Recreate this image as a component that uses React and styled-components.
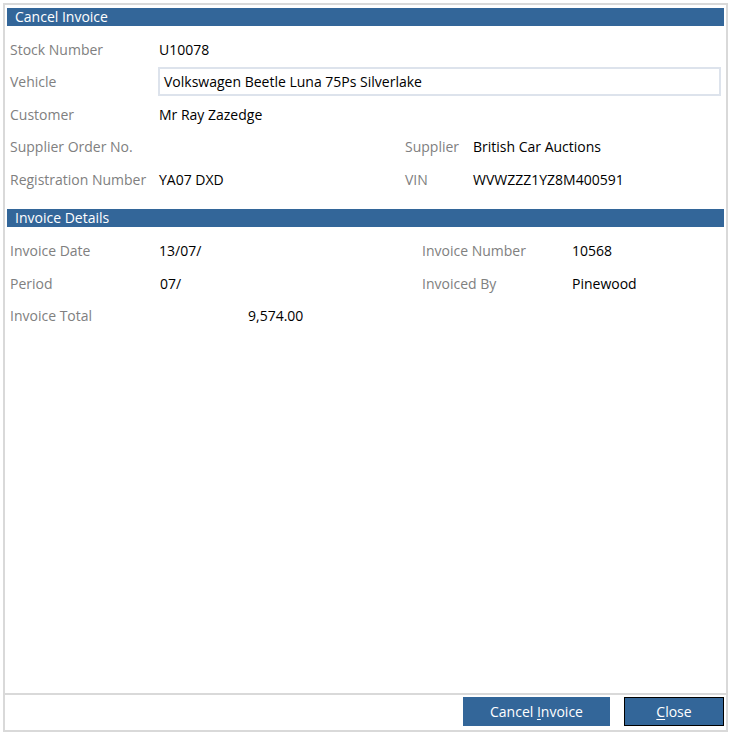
import React from "react";
import styled, { createGlobalStyle } from "styled-components";

const GlobalStyle = createGlobalStyle`
  html, body { margin: 0; padding: 0; background: #ffffff; }
  body { font-family: "Open Sans", "Noto Sans", "Liberation Sans", sans-serif; font-size: 14px; color: #000; }
  * { box-sizing: border-box; }
`;

const Frame = styled.div`
  margin: 3px 0 0 3px;
  width: 725px;
  height: 729px;
  border: 2px solid #d9d9d9;
  display: flex;
  flex-direction: column;
  background: #fff;
`;

const Body = styled.div`
  flex: 1;
  padding: 3px 2px 0 2px;
`;

const SectionHeader = styled.div`
  height: 18px;
  line-height: 18px;
  background: #336699;
  color: #fff;
  padding-left: 8px;
  font-size: 14px;
  margin-top: ${(p) => p.$top || 0}px;
`;

const Rows = styled.div`
  padding-top: ${(p) => p.$pad || 7}px;
  padding-left: 3px;
  display: flex;
  flex-direction: column;
`;

const Row = styled.div`
  height: ${(p) => p.$h || 33}px;
  display: grid;
  grid-template-columns: ${(p) => p.$cols};
  align-items: center;
  white-space: nowrap;
`;

const Label = styled.div`
  color: #808080;
`;

const Value = styled.div`
  color: #000;
  padding-left: ${(p) => p.$indent || 0}px;
`;

const TextBox = styled.div`
  grid-column: 2 / span 3;
  height: 29px;
  border: 2px solid #dde3ec;
  margin-left: -1px;
  margin-right: 3px;
  padding-left: 4px;
  display: flex;
  align-items: center;
`;

const Footer = styled.div`
  border-top: 2px solid #d9d9d9;
  height: 37px;
  display: flex;
  justify-content: flex-end;
  align-items: flex-start;
  gap: 14px;
  padding: 2px 2px 0 0;
`;

const Button = styled.button`
  font-family: inherit;
  font-size: 14px;
  color: #fff;
  background: #336699;
  border: 1px solid ${(p) => (p.$focused ? "#000" : "#336699")};
  height: 29px;
  width: ${(p) => p.$w}px;
  padding: 0;
  cursor: pointer;
  u { text-decoration: underline; text-underline-offset: 2px; }
`;

const topCols = "149px 246px 68px 1fr";
const invCols = "149px 263px 150px 1fr";

export default function App() {
  return (
    <>
      <GlobalStyle />
      <Frame>
        <Body>
          <SectionHeader>Cancel Invoice</SectionHeader>
          <Rows $pad={7}>
            <Row $cols={topCols} $h={32.5}>
              <Label>Stock Number</Label>
              <Value>U10078</Value>
            </Row>
            <Row $cols={topCols} $h={32.5}>
              <Label>Vehicle</Label>
              <TextBox>Volkswagen Beetle Luna 75Ps Silverlake</TextBox>
            </Row>
            <Row $cols={topCols} $h={32.5}>
              <Label>Customer</Label>
              <Value>Mr Ray Zazedge</Value>
            </Row>
            <Row $cols={topCols} $h={32.5}>
              <Label>Supplier Order No.</Label>
              <Value></Value>
              <Label>Supplier</Label>
              <Value>British Car Auctions</Value>
            </Row>
            <Row $cols={topCols} $h={32.5}>
              <Label>Registration Number</Label>
              <Value>YA07 DXD</Value>
              <Label>VIN</Label>
              <Value>WVWZZZ1YZ8M400591</Value>
            </Row>
          </Rows>
          <SectionHeader $top={13}>Invoice Details</SectionHeader>
          <Rows $pad={8}>
            <Row $cols={invCols} $h={32.5}>
              <Label>Invoice Date</Label>
              <Value>13/07/</Value>
              <Label>Invoice Number</Label>
              <Value>10568</Value>
            </Row>
            <Row $cols={invCols} $h={32.5}>
              <Label>Period</Label>
              <Value $indent={1}>07/</Value>
              <Label>Invoiced By</Label>
              <Value>Pinewood</Value>
            </Row>
            <Row $cols={invCols} $h={32.5}>
              <Label>Invoice Total</Label>
              <Value $indent={89}>9,574.00</Value>
            </Row>
          </Rows>
        </Body>
        <Footer>
          <Button $w={147}>
            Cancel <u>I</u>nvoice
          </Button>
          <Button $w={100} $focused>
            <u>C</u>lose
          </Button>
        </Footer>
      </Frame>
    </>
  );
}
